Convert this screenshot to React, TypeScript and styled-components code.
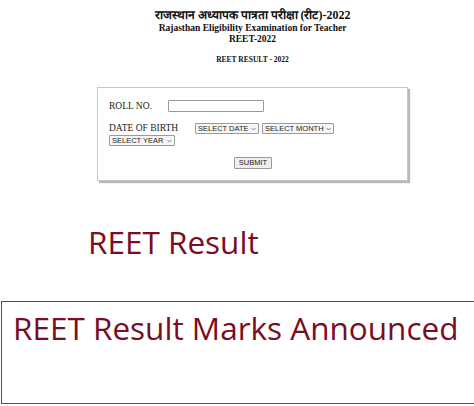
import React from "react";
import styled, { createGlobalStyle } from "styled-components";

const GlobalStyle = createGlobalStyle`
html, body {
  margin: 0;
  padding: 0;
  background: #ffffff;
  overflow: hidden;
}
* {
  box-sizing: border-box;
}
`

const dateOptions = ["SELECT DATE", ...Array.from({ length: 31 }, (_, i) => String(i + 1))]
const monthOptions = ["SELECT MONTH", "JAN", "FEB", "MAR", "APR", "MAY", "JUN", "JUL", "AUG", "SEP", "OCT", "NOV", "DEC"]
const yearOptions = ["SELECT YEAR", ...Array.from({ length: 30 }, (_, i) => String(1980 + i))]

const Chevron = () => (
    <svg width="5" height="4" viewBox="0 0 5 4">
        <path d="M0.5 1 L2.5 3 L4.5 1" fill="none" stroke="#666" strokeWidth="0.8" />
    </svg>
)

const Dropdown = ({ options, width }: { options: string[], width: number }) => (
    <SelectWrap width={width}>
        <Select defaultValue={options[0]}>
            {options.map((value) => (
                <option key={value} value={value}>{value}</option>
            ))}
        </Select>
        <ChevronSlot>
            <Chevron />
        </ChevronSlot>
    </SelectWrap>
)

const App = () => {
    return (
        <Page>
            <GlobalStyle />
            <Top>
                <Header>
                    <HindiTitle>राजस्थान अध्यापक पात्रता परीक्षा (रीट)-2022</HindiTitle>
                    <SubTitle>Rajasthan Eligibility Examination for Teacher</SubTitle>
                    <SubTitle>REET-2022</SubTitle>
                    <ResultTitle>REET RESULT - 2022</ResultTitle>
                </Header>
                <FormBox>
                    <Row>
                        <Label width={59}>ROLL NO.</Label>
                        <TextInput type="text" />
                    </Row>
                    <Row>
                        <Label width={86}>DATE OF BIRTH</Label>
                        <Dropdown options={dateOptions} width={64} />
                        <Dropdown options={monthOptions} width={72} />
                        <Dropdown options={yearOptions} width={66} />
                    </Row>
                    <SubmitRow>
                        <SubmitButton type="button">SUBMIT</SubmitButton>
                    </SubmitRow>
                </FormBox>
            </Top>
            <Headline>REET Result</Headline>
            <Banner>
                <BannerText>REET Result Marks Announced</BannerText>
            </Banner>
        </Page>
    )
}

export default App

const Page = styled.div`
width: 474px;
height: 406px;
overflow: hidden;
background: #ffffff;
`

const Top = styled.div`
padding-left: 31px;
width: 474px;
`

const Header = styled.div`
padding-top: 8px;
text-align: center;
font-family: "Liberation Serif", "Noto Serif", serif;
font-weight: bold;
color: #111111;
`

const HindiTitle = styled.div`
font-size: 12px;
line-height: 15px;
`

const SubTitle = styled.div`
font-size: 9.5px;
line-height: 11px;
`

const ResultTitle = styled.div`
margin-top: 10px;
font-size: 7.5px;
line-height: 9px;
`

const FormBox = styled.div`
width: 311px;
margin: 23px auto 0;
padding: 12px 10px 11px 11px;
border: 1px solid #c8c8c8;
box-shadow: 2px 2px 1px #b8b8b8;
display: flex;
flex-direction: column;
gap: 11px;
`

const Row = styled.div`
display: flex;
flex-wrap: wrap;
align-items: center;
row-gap: 1px;
column-gap: 3px;
`

const Label = styled.span<{ width: number }>`
width: ${({ width }) => width - 3}px;
font-family: "Liberation Serif", serif;
font-size: 9.5px;
line-height: 11px;
color: #222222;
`

const TextInput = styled.input`
display: block;
width: 96px;
height: 12px;
border: 1px solid #9a9a9a;
border-radius: 1px;
padding: 0;
outline: none;
`

const SelectWrap = styled.div<{ width: number }>`
position: relative;
width: ${({ width }) => width}px;
height: 11px;
`

const Select = styled.select`
display: block;
appearance: none;
width: 100%;
height: 11px;
margin: 0;
padding: 0 8px 0 2px;
border: 1px solid #9a9a9a;
border-radius: 1px;
background: #f6f6f6;
font-family: "Liberation Sans", Arial, sans-serif;
font-size: 7.5px;
line-height: 9px;
color: #222222;
outline: none;
`

const ChevronSlot = styled.span`
position: absolute;
right: 3px;
top: 4px;
display: flex;
pointer-events: none;
`

const SubmitRow = styled.div`
display: flex;
justify-content: center;
`

const SubmitButton = styled.button`
display: block;
width: 38px;
height: 12px;
padding: 0;
border: 1px solid #9a9a9a;
border-radius: 1px;
background: #efefef;
font-family: "Liberation Sans", Arial, sans-serif;
font-size: 7.5px;
line-height: 10px;
color: #222222;
`

const Headline = styled.div`
margin-top: 45px;
padding-left: 88px;
font-family: "Open Sans", "Noto Sans", sans-serif;
font-size: 31.5px;
line-height: 32px;
color: #7a0d20;
`

const Banner = styled.div`
margin-top: 43px;
margin-left: 1px;
width: 490px;
height: 103px;
border: 1.5px solid #8e3347;
padding: 10px 0 0 11px;
`

const BannerText = styled.div`
font-family: "Open Sans", "Noto Sans", sans-serif;
font-size: 31.5px;
line-height: 32px;
color: #7a0d20;
white-space: nowrap;
`
